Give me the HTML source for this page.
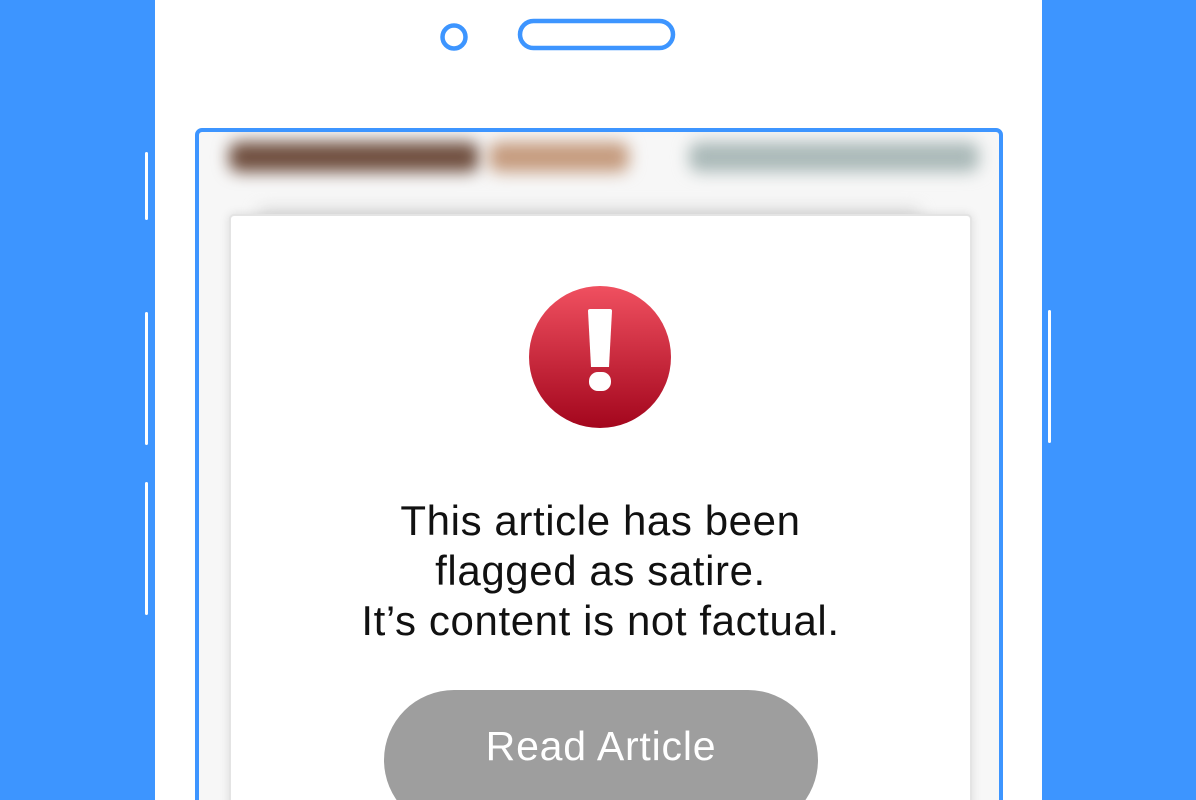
<!DOCTYPE html>
<html><head><style>
html,body{margin:0;padding:0;width:1196px;height:800px;overflow:hidden;background:#3d95ff;font-family:"Liberation Sans",sans-serif}
#wrap{position:relative;width:1196px;height:800px;overflow:hidden}
.phone{position:absolute;left:155px;top:0;width:887px;height:800px;background:#fff}
.btn{position:absolute;width:3px;background:#fff;border-radius:2px}
.screen{position:absolute;left:195px;top:128px;width:800px;height:680px;border:4px solid #3d95ff;border-radius:7px;background:#f7f7f7;overflow:hidden}
.blur{position:absolute;filter:blur(8px)}
.card{position:absolute;left:229px;top:214px;width:739px;height:620px;background:#fff;border:2px solid #e4e4e4;border-radius:5px;box-shadow:0 0 10px rgba(0,0,0,.12)}
.txt{position:absolute;left:229px;width:743px;top:496px;text-align:center;font-size:42px;line-height:50px;color:#111;letter-spacing:0.6px}
.read{position:absolute;left:384px;top:690px;width:434px;height:140px;border-radius:70px;background:#9e9e9e;color:#fff;font-size:41px;text-align:center;line-height:113px;letter-spacing:0.8px}
</style></head><body><div id="wrap">
<div class="btn" style="left:145px;top:152px;height:68px"></div>
<div class="btn" style="left:145px;top:312px;height:133px"></div>
<div class="btn" style="left:145px;top:482px;height:133px"></div>
<div class="btn" style="left:1048px;top:310px;height:133px"></div>
<div class="phone"></div>
<svg style="position:absolute;left:0;top:0" width="1196" height="80">
<circle cx="454" cy="37" r="11.5" fill="none" stroke="#3d95ff" stroke-width="4.5"/>
<rect x="520" y="21" width="153" height="27" rx="13.5" fill="none" stroke="#3d95ff" stroke-width="4.5"/>
</svg>
<div class="screen">
<div class="blur" style="left:30px;top:10px;width:250px;height:30px;background:#6f4e3e;border-radius:10px"></div>
<div class="blur" style="left:290px;top:10px;width:140px;height:30px;background:#c59b7e;border-radius:10px"></div>
<div class="blur" style="left:490px;top:10px;width:290px;height:30px;background:#aab9b8;border-radius:10px"></div>
<div class="blur" style="left:60px;top:78px;width:660px;height:8px;background:#ccc"></div>
</div>
<div class="card"></div>
<svg style="position:absolute;left:529px;top:286px" width="142" height="142" viewBox="0 0 142 142">
<defs><linearGradient id="g" x1="0" y1="0" x2="0" y2="1"><stop offset="0" stop-color="#f05060"/><stop offset="1" stop-color="#a3061d"/></linearGradient></defs>
<circle cx="71" cy="71" r="71" fill="url(#g)"/>
<path d="M59 25 Q59 23 61 23 H81 Q83 23 83 25 L80 81 H62 Z" fill="#fff"/>
<rect x="60" y="86" width="22" height="19" rx="9" fill="#fff"/>
</svg>
<div class="txt">This article has been<br>flagged as satire.<br>It’s content is not factual.</div>
<div class="read">Read Article</div>
</div></body></html>
